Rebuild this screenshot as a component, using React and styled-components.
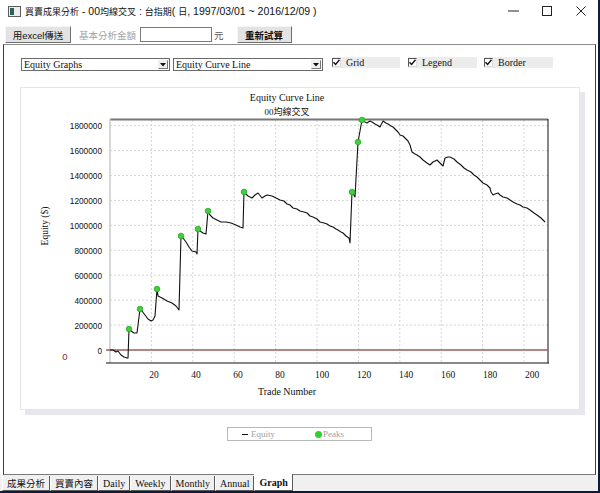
import React from "react";
import styled, { createGlobalStyle } from "styled-components";

const GlobalStyle = createGlobalStyle`
  html, body {
    margin: 0;
    padding: 0;
    background: #0e1b3c;
  }
  body {
    width: 600px;
    height: 493px;
    overflow: hidden;
    font-family: "Liberation Sans", "Noto Sans CJK TC", sans-serif;
  }
`;

const SERIF = `"Liberation Serif", "Noto Sans CJK TC", serif`;

const Window = styled.div`
  width: 598px;
  height: 491px;
  background: #fff;
  display: flex;
  flex-direction: column;
`;

const TitleBar = styled.div`
  height: 22px;
  display: flex;
  align-items: center;
  padding-left: 8px;
  flex-shrink: 0;
`;

const Title = styled.div`
  margin-left: 4px;
  font-size: 10.5px;
  color: #111;
  white-space: nowrap;
`;

const Han = styled.span`
  font-size: 9px;
`;

const Controls = styled.div`
  margin-left: auto;
  display: flex;
  align-self: stretch;
`;

const ControlButton = styled.div`
  width: 34px;
  display: flex;
  align-items: center;
  justify-content: center;
`;

const Toolbar = styled.div`
  height: 22px;
  display: flex;
  align-items: flex-start;
  padding: 4px 0 0 5px;
  box-sizing: border-box;
  flex-shrink: 0;
`;

const Button = styled.div`
  height: 17px;
  width: ${({ $w }) => $w}px;
  margin-left: ${({ $ml }) => $ml || 0}px;
  box-sizing: border-box;
  background: #e3e3e3;
  border: 1px solid;
  border-color: #f6f6f6 #6f6f6f #6f6f6f #f6f6f6;
  display: flex;
  align-items: center;
  justify-content: center;
  font-size: ${({ $fs }) => $fs || 10}px;
  font-weight: ${({ $bold }) => ($bold ? 700 : 400)};
  color: #111;
  white-space: nowrap;
`;

const FieldLabel = styled.div`
  margin-left: ${({ $ml }) => $ml}px;
  height: 17px;
  display: flex;
  align-items: center;
  font-size: 9.5px;
  color: ${({ $c }) => $c};
  white-space: nowrap;
`;

const Input = styled.div`
  margin: 1px 0 0 4px;
  width: 72px;
  height: 15px;
  box-sizing: border-box;
  border: 1px solid #7a7a7a;
  background: #fff;
`;

const Content = styled.div`
  flex: 1;
  margin: 0 2px 0 3px;
  border: 1px solid;
  border-color: #8c8c8c #3d3d3d #7a7a7a #3d3d3d;
  display: flex;
  flex-direction: column;
  align-items: flex-start;
  min-height: 0;
`;

const OptionsRow = styled.div`
  display: flex;
  align-items: flex-start;
  padding: 13px 0 0 17px;
`;

const Select = styled.div`
  width: ${({ $w }) => $w}px;
  height: 13px;
  margin-left: ${({ $ml }) => $ml || 0}px;
  box-sizing: border-box;
  border: 1px solid #6a6a6a;
  background: #fff;
  display: flex;
  align-items: center;
  font-family: ${SERIF};
  font-size: 10px;
  color: #111;
  padding-left: 2px;
`;

const SelectText = styled.span`
  flex: 1;
  white-space: nowrap;
`;

const SelectArrow = styled.div`
  width: 10px;
  height: 9px;
  margin-right: 1px;
  box-sizing: border-box;
  border: 1px solid;
  border-color: #eee #777 #777 #eee;
  background: #f0f0f0;
  display: flex;
  align-items: center;
  justify-content: center;
`;

const CheckItem = styled.div`
  width: ${({ $w }) => $w}px;
  margin-left: ${({ $ml }) => $ml}px;
  height: 11px;
  margin-top: -1px;
  background: #ececec;
  display: flex;
  align-items: center;
  font-family: ${SERIF};
  font-size: 10px;
  color: #111;
`;

const CheckBox = styled.div`
  width: 9px;
  height: 9px;
  box-sizing: border-box;
  border: 1px solid;
  border-color: #555 #ddd #ddd #555;
  background: #fff;
  display: flex;
  align-items: center;
  justify-content: center;
  margin-right: 5px;
`;

const ChartPanel = styled.div`
  margin: 16px 0 0 16px;
  width: 560px;
  height: 323px;
  box-sizing: border-box;
  border: 1px solid #e6e6e6;
  box-shadow: 5px 5px 0 #e9e7ee;
  background: #fff;
`;

const Legend = styled.div`
  margin: 17px 0 0 223px;
  width: 145px;
  height: 14px;
  box-sizing: border-box;
  border: 1px solid #b8b8b8;
  display: flex;
  align-items: center;
  font-family: ${SERIF};
  font-size: 9px;
  color: #a0a0a0;
`;

const LegendEntry = styled.div`
  display: flex;
  align-items: center;
  margin-left: ${({ $ml }) => $ml}px;
`;

const LegendDash = styled.span`
  width: 6px;
  height: 1px;
  background: #111;
  margin-right: 3px;
`;

const LegendDot = styled.span`
  width: 7px;
  height: 7px;
  border-radius: 50%;
  background: #2fd12f;
  margin-right: 1px;
`;

const TabBar = styled.div`
  height: 16px;
  background: #f0f0f0;
  display: flex;
  align-items: flex-start;
  padding-left: 2px;
  flex-shrink: 0;
`;

const Tab = styled.div`
  height: ${({ $active }) => ($active ? 17 : 15)}px;
  margin-top: ${({ $active }) => ($active ? -1 : 1)}px;
  padding: 0 4px;
  box-sizing: border-box;
  border: 1px solid;
  border-top: none;
  border-color: #fff #5a5a5a #5a5a5a #fff;
  background: ${({ $active }) => ($active ? "#fff" : "#f0f0f0")};
  display: flex;
  align-items: center;
  font-family: ${SERIF};
  font-size: ${({ $cjk }) => ($cjk ? 9.5 : 10)}px;
  font-weight: ${({ $active }) => ($active ? 700 : 400)};
  color: #111;
  white-space: nowrap;
`;

const CheckMark = () => (
  <svg width="7" height="7" viewBox="0 0 7 7">
    <path d="M0.5 3.2 L2.6 5.4 L6.5 0.8" fill="none" stroke="#111" strokeWidth="1.4" />
  </svg>
);

const DownArrow = () => (
  <svg width="6" height="4" viewBox="0 0 6 4">
    <path d="M0 0 H6 L3 3.5 Z" fill="#111" />
  </svg>
);

const AppIcon = () => (
  <svg width="13" height="11" viewBox="0 0 13 11">
    <rect x="0.5" y="0.5" width="12" height="10" fill="#ececec" stroke="#5d5d5d" />
    <rect x="2" y="2" width="4" height="7" fill="#2f5f5c" />
  </svg>
);

/* equity curve, page coordinates */
const CURVE = [
  [110, 350], [113, 350], [116, 352], [118, 351], [121, 355], [124, 357], [127, 358], [128, 358],
  [129, 329], [131, 331], [134, 333], [137, 333], [140, 309], [142, 311], [145, 315], [148, 319],
  [151, 321], [153, 320], [155, 316], [157, 289], [158, 296], [162, 298], [167, 301], [172, 303],
  [176, 306], [179, 310], [181, 236], [183, 238], [186, 242], [189, 247], [192, 251], [196, 252],
  [197, 254], [198, 229], [200, 231], [203, 233], [206, 234], [208, 211], [210, 215], [213, 218],
  [217, 220], [221, 222], [226, 222], [231, 223], [236, 225], [240, 227], [243, 228], [244, 192],
  [248, 196], [252, 198], [255, 195], [258, 193], [262, 198], [265, 196], [267, 195], [272, 196],
  [276, 198], [280, 200], [284, 201], [287, 204], [290, 205], [293, 208], [297, 209], [300, 211],
  [304, 212], [307, 213], [310, 216], [313, 217], [317, 219], [320, 222], [324, 223], [327, 224],
  [330, 226], [333, 227], [336, 229], [338, 230], [341, 232], [343, 233], [346, 236], [349, 238],
  [350, 243], [352, 192], [355, 197], [358, 142], [362, 120], [365, 122], [367, 123], [370, 121],
  [372, 122], [375, 124], [377, 125], [380, 127], [383, 121], [386, 123], [388, 124], [391, 126],
  [393, 127], [396, 130], [398, 132], [400, 135], [403, 136], [405, 138], [408, 141], [410, 145],
  [412, 152], [415, 154], [417, 155], [420, 157], [423, 160], [427, 163], [430, 165], [433, 162],
  [435, 161], [437, 160], [440, 163], [443, 166], [445, 158], [448, 157], [450, 157], [454, 159],
  [457, 162], [461, 165], [464, 168], [467, 170], [471, 172], [474, 175], [477, 177], [480, 180],
  [483, 183], [487, 185], [490, 188], [491, 192], [493, 195], [495, 194], [498, 193], [500, 195],
  [503, 197], [507, 198], [510, 200], [513, 202], [517, 204], [520, 205], [523, 207], [527, 208],
  [530, 210], [534, 213], [537, 215], [541, 218], [545, 222],
];

const PEAKS = [
  [129, 329], [140, 309], [157, 289], [181, 236], [198, 229], [208, 211], [244, 192],
  [352, 192], [358, 142], [362, 120],
];

const Y_TICKS = [0, 200000, 400000, 600000, 800000, 1000000, 1200000, 1400000, 1600000, 1800000];
const X_TICKS = [20, 40, 60, 80, 100, 120, 140, 160, 180, 200];

const yOf = (v) => 350 - (v / 200000) * 24.93;
const gridX = (n) => 110 + 2.07 * n;
const labelX = (n) => 112 + 2.1 * n;

function EquityChart() {
  const path = CURVE.map(([x, y], i) => `${i ? "L" : "M"}${x} ${y}`).join(" ");
  return (
    <svg width="558" height="321" viewBox="21 88 558 321" style={{ display: "block" }}>
      <g fontFamily={SERIF} fontSize="10" fill="#111">
        <text x="287" y="101" textAnchor="middle">Equity Curve Line</text>
        <text x="287" y="115" textAnchor="middle" fontSize="9">00均線交叉</text>
        <text x="287" y="395" textAnchor="middle">Trade Number</text>
        <text transform="translate(48 226) rotate(-90)" textAnchor="middle" fontSize="9.5">
          Equity ($)
        </text>
      </g>

      <g stroke="#d6d6d6" strokeWidth="1" strokeDasharray="2 2">
        {Y_TICKS.slice(1).map((v) => (
          <line key={v} x1="110" x2="548" y1={yOf(v)} y2={yOf(v)} />
        ))}
        {X_TICKS.map((n) => (
          <line key={n} x1={gridX(n)} x2={gridX(n)} y1="120" y2="363" />
        ))}
      </g>

      <line x1="110" x2="548" y1="119.5" y2="119.5" stroke="#777" strokeWidth="2" />
      <line x1="110" x2="110" y1="119" y2="363" stroke="#c9c9c9" strokeWidth="1.5" />
      <line x1="548" x2="548" y1="119" y2="363" stroke="#111" strokeWidth="1" />
      <line x1="106" x2="548" y1="350" y2="350" stroke="#9b5c5c" strokeWidth="1.4" />
      <line x1="106" x2="549" y1="363" y2="363" stroke="#111" strokeWidth="1.2" />

      <g fontFamily={`"Liberation Sans", sans-serif`} fontSize="9.5" fill="#111" textAnchor="end">
        {Y_TICKS.map((v) => {
          const s = String(v);
          return (
            <text
              key={v}
              x="102"
              y={yOf(v) + 3.5}
              textLength={s.length * 4.6}
              lengthAdjust="spacingAndGlyphs"
            >
              {s}
            </text>
          );
        })}
      </g>
      <text x="65" y="360" textAnchor="middle" fontFamily={`"Liberation Sans", sans-serif`} fontSize="9.5" fill="#8b2a2a">
        0
      </text>

      <g fontFamily={SERIF} fontSize="9.5" fill="#111" textAnchor="middle">
        {X_TICKS.map((n) => (
          <text key={n} x={labelX(n)} y="378">{n}</text>
        ))}
      </g>

      <path d={path} fill="none" stroke="#111" strokeWidth="1.1" strokeLinejoin="round" />
      {PEAKS.map(([x, y]) => (
        <circle key={`${x}-${y}`} cx={x} cy={y} r="2.8" fill="#3bd23b" stroke="#27a827" strokeWidth="0.8" />
      ))}
    </svg>
  );
}

const TABS = [
  { label: "成果分析", cjk: true },
  { label: "買賣內容", cjk: true },
  { label: "Daily" },
  { label: "Weekly" },
  { label: "Monthly" },
  { label: "Annual" },
  { label: "Graph", active: true },
];

export default function App() {
  return (
    <>
      <GlobalStyle />
      <Window>
        <TitleBar>
          <AppIcon />
          <Title>
            <Han>買賣成果分析</Han> - 00<Han>均線交叉</Han> : <Han>台指期</Han>( <Han>日</Han>, 1997/03/01 ~ 2016/12/09 )
          </Title>
          <Controls>
            <ControlButton>
              <svg width="11" height="2" viewBox="0 0 11 2">
                <line x1="0" x2="11" y1="1" y2="1" stroke="#222" strokeWidth="1" />
              </svg>
            </ControlButton>
            <ControlButton>
              <svg width="10" height="10" viewBox="0 0 10 10">
                <rect x="0.5" y="0.5" width="9" height="9" fill="none" stroke="#222" strokeWidth="1" />
              </svg>
            </ControlButton>
            <ControlButton>
              <svg width="10" height="10" viewBox="0 0 10 10">
                <path d="M0.5 0.5 L9.5 9.5 M9.5 0.5 L0.5 9.5" stroke="#222" strokeWidth="1" />
              </svg>
            </ControlButton>
          </Controls>
        </TitleBar>

        <Toolbar>
          <Button $w={66} $fs={9.5}>用excel傳送</Button>
          <FieldLabel $ml={8} $c="#a3a3a3">基本分析金額</FieldLabel>
          <Input />
          <FieldLabel $ml={2} $c="#555">元</FieldLabel>
          <Button $w={55} $ml={13} $fs={9.5} $bold>重新試算</Button>
        </Toolbar>

        <Content>
          <OptionsRow>
            <Select $w={149}>
              <SelectText>Equity Graphs</SelectText>
              <SelectArrow><DownArrow /></SelectArrow>
            </Select>
            <Select $w={150} $ml={3}>
              <SelectText>Equity Curve Line</SelectText>
              <SelectArrow><DownArrow /></SelectArrow>
            </Select>
            <CheckItem $w={68} $ml={9}>
              <CheckBox><CheckMark /></CheckBox>Grid
            </CheckItem>
            <CheckItem $w={69} $ml={8}>
              <CheckBox><CheckMark /></CheckBox>Legend
            </CheckItem>
            <CheckItem $w={69} $ml={7}>
              <CheckBox><CheckMark /></CheckBox>Border
            </CheckItem>
          </OptionsRow>

          <ChartPanel>
            <EquityChart />
          </ChartPanel>

          <Legend>
            <LegendEntry $ml={14}>
              <LegendDash />Equity
            </LegendEntry>
            <LegendEntry $ml={40}>
              <LegendDot />Peaks
            </LegendEntry>
          </Legend>
        </Content>

        <TabBar>
          {TABS.map((t) => (
            <Tab key={t.label} $active={t.active} $cjk={t.cjk}>
              {t.label}
            </Tab>
          ))}
        </TabBar>
      </Window>
    </>
  );
}
